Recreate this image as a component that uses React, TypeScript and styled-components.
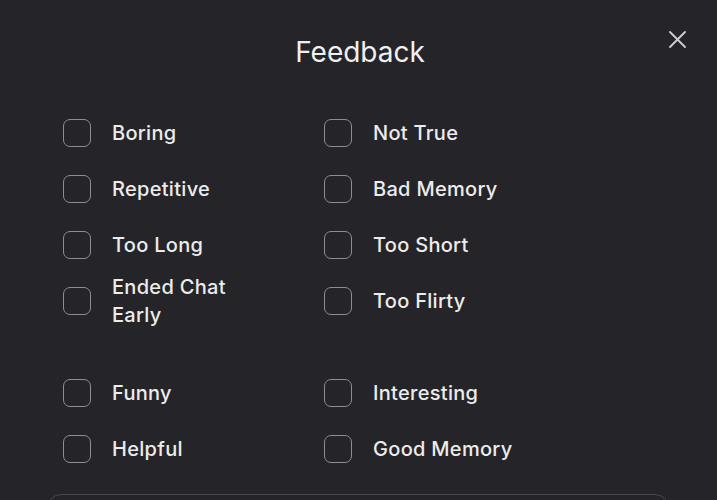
import React from "react";
import styled, { createGlobalStyle } from "styled-components";

const Global = createGlobalStyle`
  html, body { margin: 0; padding: 0; background: #252529; }
  body { font-family: Inter, "Noto Sans", sans-serif; color: #ececec; }
  * { box-sizing: border-box; }
`;

const Modal = styled.div`
  position: relative;
  width: 717px;
  height: 500px;
  overflow: hidden;
  background: #252529;
  display: flex;
  flex-direction: column;
  & > * { flex: none; }
`;

const Title = styled.h1`
  margin: 0;
  padding-top: 35px;
  padding-left: 3px;
  height: 105px;
  text-align: center;
  font-size: 28px;
  line-height: 34px;
  font-weight: 400;
  color: #f0f0f0;
`;

const CloseButton = styled.button`
  position: absolute;
  top: 28px;
  right: 29px;
  width: 22px;
  height: 22px;
  padding: 0;
  border: none;
  background: transparent;
  display: flex;
  align-items: center;
  justify-content: center;
  cursor: pointer;
`;

const Section = styled.div<{ $mb?: number }>`
  display: grid;
  grid-template-columns: 261px 261px;
  grid-auto-rows: minmax(56px, auto);
  padding-left: 63px;
  margin-bottom: ${(p) => p.$mb ?? 0}px;
`;

const Option = styled.label`
  display: flex;
  align-items: center;
  gap: 21px;
  cursor: pointer;
`;

const Box = styled.span`
  flex: none;
  width: 28px;
  height: 28px;
  border: 1.5px solid #8e8e92;
  border-radius: 7px;
`;

const Label = styled.span`
  font-size: 20px;
  line-height: 28px;
  font-weight: 500;
  letter-spacing: 0.3px;
  color: #ececec;
  max-width: 150px;
`;

const Details = styled.div`
  margin: 17px 48px 0 47px;
  height: 80px;
  border: 1.5px solid #48484d;
  border-radius: 14px;
`;

const negative = [
  ["Boring", "Not True"],
  ["Repetitive", "Bad Memory"],
  ["Too Long", "Too Short"],
  ["Ended Chat Early", "Too Flirty"],
];
const positive = [
  ["Funny", "Interesting"],
  ["Helpful", "Good Memory"],
];

const Row = ({ items }: { items: string[][] }) => (
  <>
    {items.flat().map((t) => (
      <Option key={t}>
        <Box />
        <Label>{t}</Label>
      </Option>
    ))}
  </>
);

export default function App() {
  return (
    <Modal>
      <Global />
      <Title>Feedback</Title>
      <CloseButton aria-label="Close">
        <svg width="17" height="17" viewBox="0 0 17 17">
          <path d="M1 1L16 16M16 1L1 16" stroke="#cfcfd2" strokeWidth="1.8" strokeLinecap="round" />
        </svg>
      </CloseButton>
      <Section $mb={36}>
        <Row items={negative} />
      </Section>
      <Section>
        <Row items={positive} />
      </Section>
      <Details />
    </Modal>
  );
}
